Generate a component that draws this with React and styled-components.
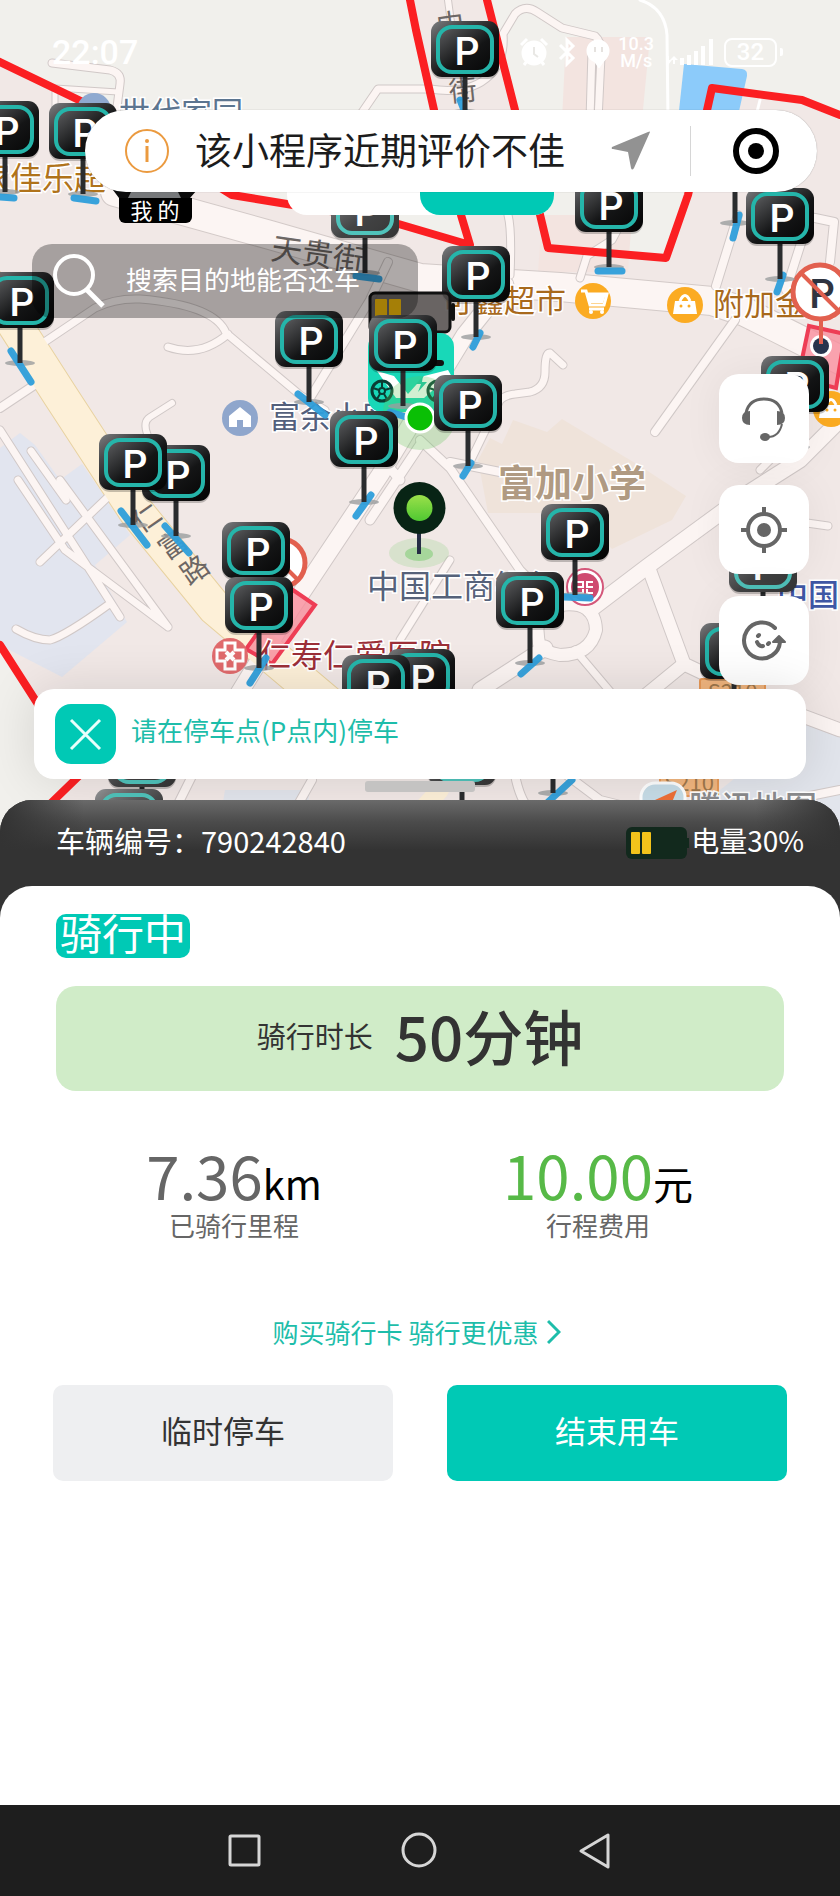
import React from "react";
import styled, { createGlobalStyle } from "styled-components";

const TEAL = "#00c9b5";
const FONT = '"Noto Sans CJK SC", sans-serif';

const GlobalStyle = createGlobalStyle`
  * { box-sizing: border-box; }
  body { margin: 0; background: #fff; font-family: ${FONT}; }
  button, input { font-family: inherit; }
  button { border: 0; padding: 0; background: none; cursor: pointer; }
`;

const Page = styled.div`
  min-height: 100vh;
  display: flex;
  flex-direction: column;
`;

/* ---------- map section ---------- */

const MapArea = styled.section`
  position: relative;
`;

const MapCanvas = styled.svg`
  position: absolute;
  top: 0;
  left: 0;
  width: 100%;
  height: calc(100% + 50px);
  font-family: ${FONT};
`;

const Overlay = styled.div`
  position: relative;
  display: flex;
  flex-direction: column;
`;

const StatusBar = styled.header`
  height: 110px;
  padding: 0 57px 6px 52px;
  display: flex;
  align-items: center;
  justify-content: space-between;
  color: #fff;
  font-family: Roboto, sans-serif;
`;

const Clock = styled.time`
  font-size: 34px;
  font-weight: 500;
`;

const StatusIcons = styled.div`
  display: flex;
  align-items: center;
`;

const NetSpeed = styled.span`
  margin: 0 12px 0 8px;
  font-size: 18px;
  line-height: 17px;
  font-weight: 500;
  text-align: center;
`;

const BatteryLevel = styled.span`
  width: 53px;
  height: 29px;
  margin-left: 8px;
  border: 2px solid #fff;
  border-radius: 8px;
  font-size: 24px;
  line-height: 25px;
  font-weight: 500;
  text-align: center;
`;

const BatteryNub = styled.span`
  width: 3px;
  height: 8px;
  margin: 0 0 0 3px;
  border-radius: 0 2px 2px 0;
  background: #fff;
`;

const Capsule = styled.div`
  position: relative;
  z-index: 1;
  height: 82px;
  margin: 0 23px 0 85px;
  padding: 0 37px 0 40px;
  display: flex;
  align-items: center;
  border-radius: 41px;
  background: #fff;
  box-shadow: 0 0 1px rgba(0, 0, 0, 0.4);
`;

const CapsuleText = styled.span`
  flex: 1;
  margin-left: 24px;
  padding-bottom: 4px;
  font-size: 37px;
  line-height: 48px;
  color: #1c1c1c;
  white-space: nowrap;
`;

const CapsuleDivider = styled.span`
  width: 1px;
  height: 50px;
  margin: 0 41px 0 39px;
  background: #d6d6d6;
`;

const UnderRow = styled.div`
  height: 71px;
  margin-top: -40px;
  padding-left: 113px;
  display: flex;
  align-items: flex-start;
`;

const MineButton = styled.button`
  width: 84px;
  align-self: flex-end;
  display: flex;
  flex-direction: column;
  align-items: center;
`;

const MineLabel = styled.span`
  width: 73px;
  height: 25px;
  border-radius: 0 0 6px 6px;
  background: #000;
  color: #fff;
  font-size: 22px;
  line-height: 22px;
  white-space: pre;
`;

const TabPill = styled.div`
  width: 267px;
  height: 63px;
  margin-left: 90px;
  display: flex;
  justify-content: flex-end;
  border-radius: 20px;
  background: #fff;
`;

const ActiveTab = styled.div`
  width: 134px;
  border-radius: 20px;
  background: ${TEAL};
`;

const SearchBox = styled.label`
  width: 46%;
  height: 74px;
  margin: 21px 0 0 32px;
  padding-left: 20px;
  display: flex;
  align-items: center;
  gap: 19px;
  border-radius: 20px;
  background: rgba(0, 0, 0, 0.31);
`;

const SearchInput = styled.input`
  flex: 1;
  min-width: 0;
  height: 46px;
  padding: 0 0 6px;
  border: 0;
  outline: 0;
  background: none;
  color: #fff;
  font-size: 26px;
  &::placeholder { color: #fff; opacity: 1; }
`;

const Tools = styled.nav`
  margin: 56px 31px 0 0;
  display: flex;
  flex-direction: column;
  align-items: flex-end;
  gap: 22px;
`;

const ToolButton = styled.button`
  width: 90px;
  height: 89px;
  display: flex;
  align-items: center;
  justify-content: center;
  border-radius: 20px;
  background: #fff;
  box-shadow: 0 0 40px rgba(0, 0, 0, 0.06);
`;

const Notice = styled.div`
  height: 90px;
  margin: 4px 34px 0;
  padding-left: 21px;
  display: flex;
  align-items: center;
  gap: 15px;
  border-radius: 20px;
  background: #fff;
  box-shadow: 0 0 50px rgba(0, 0, 0, 0.12);
  color: #1dbdaa;
  font-size: 26px;
  line-height: 36px;
`;

const NoticeText = styled.span`
  padding-bottom: 8px;
`;

const CloseButton = styled.button`
  width: 61px;
  height: 60px;
  display: flex;
  align-items: center;
  justify-content: center;
  border-radius: 16px;
  background: ${TEAL};
`;

const DragHandle = styled.div`
  width: 110px;
  height: 11px;
  margin: 2px auto 8px;
  border-radius: 3px;
  background: #c4c3c2;
`;

/* ---------- ride sheet ---------- */

const Sheet = styled.main`
  position: relative;
  flex: 1;
  display: flex;
  flex-direction: column;
  border-radius: 32px 32px 0 0;
  background: #333;
`;

const SheetHeader = styled.div`
  height: 86px;
  padding: 0 36px 0 56px;
  display: flex;
  align-items: center;
  justify-content: space-between;
  border-radius: 32px 32px 0 0;
  background: linear-gradient(90deg, #333 0, rgba(51, 51, 51, 0) 10%, rgba(51, 51, 51, 0) 90%, #333 100%),
    linear-gradient(#6a6a6a 0, #4b4b4b 22px, #333 50px);
  color: #fff;
  font-size: 28px;
  line-height: 40px;
`;

const HeaderText = styled.span`
  padding-bottom: 6px;
  font-size: ${(p) => (p.$large ? 29 : 28)}px;
`;

const Charge = styled.span`
  display: flex;
  align-items: center;
`;

const Panel = styled.div`
  flex: 1;
  padding: 28px 0 40px;
  border-radius: 32px 32px 0 0;
  background: #fff;
`;

const RideState = styled.span`
  display: block;
  width: max-content;
  height: 44px;
  margin-left: 56px;
  padding: 0 4px;
  border-radius: 10px;
  background: ${TEAL};
  color: #fff;
  font-size: 42px;
  line-height: 36px;
`;

const Duration = styled.div`
  height: 105px;
  margin: 28px 56px 0;
  padding-bottom: 7px;
  display: flex;
  align-items: center;
  justify-content: center;
  gap: 22px;
  border-radius: 20px;
  background: #d0ecc8;
  color: #333;
  font-size: 29px;
  line-height: 40px;
`;

const DurationValue = styled.strong`
  font-size: 60px;
  line-height: 80px;
  font-weight: 500;
`;

const Stats = styled.div`
  margin-top: 50px;
  padding: 0 60px 0 52px;
  display: grid;
  grid-template-columns: 1fr 1fr;
`;

const Stat = styled.div`
  display: flex;
  flex-direction: column;
  align-items: center;
  color: #666;
  font-size: 26px;
  line-height: 36px;
`;

const StatValue = styled.div`
  color: ${(p) => p.$color};
  font-size: 60px;
  line-height: 66px;
`;

const Unit = styled.span`
  color: #000;
  font-size: 40px;
  line-height: 40px;
`;

const CardLink = styled.a`
  width: max-content;
  margin: 71px auto 0;
  padding-right: 6px;
  display: flex;
  align-items: center;
  gap: 9px;
  color: #1dbdaa;
  font-size: 26px;
  line-height: 36px;
  text-decoration: none;
`;

const Actions = styled.div`
  margin-top: 35px;
  padding: 0 53px;
  display: grid;
  grid-template-columns: 1fr 1fr;
  gap: 54px;
`;

const ActionButton = styled.button`
  height: 96px;
  padding-bottom: 6px;
  border-radius: 10px;
  background: ${(p) => (p.$primary ? TEAL : "#eeeff1")};
  color: ${(p) => (p.$primary ? "#fff" : "#333")};
  font-size: 31px;
  line-height: 44px;
`;

const SystemNav = styled.footer`
  height: 91px;
  display: flex;
  align-items: center;
  justify-content: center;
  gap: 135px;
  background: #1e1e1e;
`;

const NavButton = styled.button`
  width: 40px;
  height: 40px;
`;

/* ---------- map data ---------- */

/* x, y is the foot of the sign; dash is the painted bay beside it */
const SIGNS = [
  { x: 5, y: 192, dash: [0, 197, 14, 198] },
  { x: 83, y: 194, dash: [74, 198, 96, 201] },
  { x: 465, y: 112, dash: [460, 100, 464, 110] },
  { x: 365, y: 273, dash: [356, 276, 379, 279], faded: true },
  { x: 609, y: 267, dash: [598, 271, 622, 271] },
  { x: 735, y: 223, dash: [739, 215, 733, 238] },
  { x: 780, y: 279, dash: [783, 275, 777, 292] },
  { x: 476, y: 337, dash: [480, 333, 473, 347] },
  { x: 20, y: 363, dash: [11, 351, 31, 382] },
  { x: 309, y: 402, dash: [298, 394, 325, 415] },
  { x: 403, y: 406, dash: [390, 412, 406, 417] },
  { x: 468, y: 466, dash: [471, 463, 463, 476] },
  { x: 364, y: 502, dash: [371, 495, 356, 516] },
  { x: 176, y: 536, dash: [165, 526, 189, 553] },
  { x: 133, y: 525, dash: [121, 511, 147, 545] },
  { x: 795, y: 447 },
  { x: 256, y: 613 },
  { x: 259, y: 668, dash: [266, 658, 250, 683] },
  { x: 575, y: 595, dash: [564, 597, 590, 598] },
  { x: 530, y: 663, dash: [539, 658, 521, 674] },
  { x: 421, y: 740 },
  { x: 376, y: 746 },
  { x: 763, y: 627, faded: true },
  { x: 734, y: 714 },
  { x: 142, y: 822, faded: true },
  { x: 129, y: 880, faded: true },
  { x: 462, y: 820, faded: true },
  { x: 553, y: 793, dash: [572, 780, 548, 802], faded: true },
];

const ROADS = [
  { d: "M52 63L110 70Q122 73 120 84L114 130", w: 7 },
  { d: "M55 130V88L118 92", w: 5 },
  { d: "M350 130L378 89H430Q470 95 490 75Q505 60 503 34L515 14Q525 4 537 12L562 28L595 36Q602 42 601 56L598 120M601 50H592L590 120", w: 7 },
  { d: "M448 0L452 30", w: 6 },
  { d: "M508 215Q512 230 510 275", w: 7 },
  { d: "M580 278L587 256L612 240L620 225", w: 7 },
  { d: "M738 215L716 286M810 215L786 290M815 218L834 222L830 262", w: 8 },
  { d: "M40 345L95 308Q115 298 140 299Q215 305 226 333L300 395L325 410M168 347Q200 358 228 334", w: 7 },
  { d: "M0 408L36 384", w: 8 },
  { d: "M310 398L370 300L388 262", w: 8 },
  { d: "M345 415L400 480M370 520L420 445", w: 9 },
  { d: "M235 700L290 610L380 475L465 335L505 285", w: 17 },
  { d: "M468 466L500 400Q505 395 515 394L530 392Q545 388 545 372Q545 352 550 353L563 365", w: 7 },
  { d: "M735 320L655 432", w: 8 },
  { d: "M420 440L450 468L520 570L560 610M450 462L500 472", w: 8 },
  { d: "M172 403L150 417Q142 422 148 436L158 455", w: 6 },
  { d: "M31 451L66 500M0 430L120 617M18 480L65 550L168 627M60 480L168 627M40 562L110 495M16 629Q35 640 50 640Q65 636 108 605", w: 7 },
  { d: "M410 700L400 640L450 560", w: 7 },
  { d: "M480 690L545 648M590 610L648 566L745 495L800 460L840 420", w: 15 },
  { d: "M648 566L684 664L640 700M684 664L760 700L840 730", w: 13 },
  { d: "M575 650L630 715M800 522L828 526M760 470L790 440L810 400", w: 7 },
  { d: "M540 648Q530 605 560 605Q595 600 596 630Q590 655 560 655Q545 652 540 648", w: 12 },
  { d: "M515 775Q520 800 530 810M560 770L600 800L660 815M790 800L840 790M175 810L195 770M295 810L312 780", w: 8 },
];

const RED_LINES = [
  "M0 62L85 103L232 195L385 220L470 245L461 215M434 110L416 30L410 0",
  "M487 0L515 110L548 248L666 258L688 195L712 88L802 100L840 115",
  "M0 645L82 773L48 806",
];

const LABELS = [
  { x: 119, y: 124, size: 31, color: "#5c7590", text: "世代家园" },
  { x: -22, y: 190, size: 32, color: "#b0731b", text: "家佳乐超" },
  { x: 442, y: 312, size: 31, color: "#a8691c", text: "可鑫超市" },
  { x: 713, y: 315, size: 31, color: "#a8691c", text: "附加金店" },
  { x: 269, y: 428, size: 31, color: "#53607c", text: "富余小区" },
  { x: 498, y: 497, size: 37, color: "#b09a82", text: "富加小学", weight: 700 },
  { x: 367, y: 598, size: 32, color: "#56627a", text: "中国工商银行" },
  { x: 259, y: 667, size: 32, color: "#9c2f38", text: "仁寿仁爱医院" },
  { x: 777, y: 606, size: 31, color: "#3f57a5", text: "中国", weight: 500 },
  { x: 689, y: 819, size: 32, color: "#8b8b8d", text: "腾讯地图", weight: 500 },
];

function Sign({ x, y, dash, faded }) {
  return (
    <g>
      <ellipse cx={x} cy={y} rx="15" ry="3" fill="#9b9d9f" opacity="0.8" />
      {dash && (
        <line x1={dash[0]} y1={dash[1]} x2={dash[2]} y2={dash[3]} stroke="#2f9fdb" strokeWidth="7" strokeLinecap="round" opacity="0.95" />
      )}
      <rect x={x - 2.5} y={y - 38} width="5" height="38" fill="#2a2c2e" />
      <rect x={x - 34} y={y - 89} width="68" height="56" rx="11" fill="#000" opacity="0.22" />
      <rect x={x - 34} y={y - 91} width="68" height="56" rx="11" fill="url(#sign)" />
      <rect x={x - 27} y={y - 85} width="54" height="45" rx="14" fill="none" stroke="#25b5aa" strokeWidth="4" />
      <text x={x + 2} y={y - 47} fontFamily="Roboto, sans-serif" fontSize="39" fontWeight="500" fill="#fff" textAnchor="middle">P</text>
      {faded && <rect x={x - 34} y={y - 91} width="68" height="56" rx="11" fill="#fff" opacity="0.2" />}
    </g>
  );
}

function Wheel({ x, y }) {
  return (
    <g stroke="#0a3d34" fill="none">
      <circle cx={x} cy={y} r="10" strokeWidth="3" />
      <circle cx={x} cy={y} r="3" strokeWidth="2" />
      <path strokeWidth="2" d={`M${x} ${y - 9}V${y - 3}M${x - 9} ${y - 3}L${x - 3} ${y - 1}M${x + 9} ${y - 3}L${x + 3} ${y - 1}M${x - 5} ${y + 8}L${x - 2} ${y + 3}M${x + 5} ${y + 8}L${x + 2} ${y + 3}`} />
    </g>
  );
}

function StreetMap() {
  return (
    <MapCanvas viewBox="0 0 840 850" preserveAspectRatio="xMidYMin slice" role="img" aria-label="地图">
      <defs>
        <linearGradient id="sign" x1="0" y1="0" x2="0.9" y2="1">
          <stop offset="0" stopColor="#7c7e80" />
          <stop offset="0.25" stopColor="#4a4b4d" />
          <stop offset="0.6" stopColor="#141516" />
          <stop offset="1" stopColor="#050505" />
        </linearGradient>
        <linearGradient id="pin" x1="0" y1="0" x2="0" y2="1">
          <stop offset="0" stopColor="#9be04a" />
          <stop offset="1" stopColor="#4fc832" />
        </linearGradient>
      </defs>

      <rect width="840" height="850" fill="#f1f0ec" />
      <path fill="#f1e8e6" d="M0 62L85 103L232 195L385 220L470 245L410 0H487L548 248L666 258L712 88L802 100L840 115V850H0L82 773L0 645Z" />
      <path fill="#f3e4e0" d="M566 37H650L642 120H562ZM540 245L545 215H632L628 272H538Z" />
      <path fill="#8ccbfa" d="M684 64L742 69Q748 70 747 76L737 120H678Z" />
      <path fill="#e2e5ef" d="M0 448L20 433L35 445L60 480L82 464L100 490L130 535L95 565L127 622L62 677L0 645Z" />
      <path fill="#e2e5ec" d="M806 722L840 736V850H700L720 790ZM225 790H310L300 850H215Z" />
      <path fill="#efe3da" d="M478 460L490 438L502 444L513 420L547 432L562 419L640 466L686 496L672 520L612 549L575 513H488Z" />

      <g fill="none" strokeLinecap="round" strokeLinejoin="round">
        <path d="M115 192L270 235L420 278L560 287L712 301L745 312L870 375" stroke="#d3cac8" strokeWidth="30" />
        <path d="M115 192L270 235L420 278L560 287L712 301L745 312L870 375" stroke="#fcf5f3" strokeWidth="28" />
        <path d="M-10 286L60 395L135 510L215 608L330 705" stroke="#e8d2a0" strokeWidth="36" />
        {ROADS.map((r) => (
          <path key={r.d} d={r.d} stroke="#d0c8c7" strokeWidth={r.w + 2} />
        ))}
        {ROADS.map((r) => (
          <path key={r.d} d={r.d} stroke="#fcf5f3" strokeWidth={r.w} />
        ))}
        <path d="M-10 286L60 395L135 510L215 608L330 705" stroke="#fdf0d8" strokeWidth="34" />
        <path d="M640 0Q665 8 667 35L668 120M760 100L755 120" stroke="#fff" strokeWidth="3" />
        <path d="M410 822L440 790" stroke="#fdf0d8" strokeWidth="18" />
        {RED_LINES.map((d) => (
          <path key={d} d={d} stroke="#fb1f22" strokeWidth="8" />
        ))}
      </g>

      <g fill="#f78d9c" fillOpacity="0.8" stroke="#ee3d55" strokeWidth="4">
        <path d="M290 588L315 605L272 664L246 649Z" />
        <path d="M809 326L845 334L836 388L798 378Z" />
      </g>

      <circle cx="94" cy="110" r="17" fill="#8fa9d0" />
      <circle cx="240" cy="418" r="18" fill="#8fa6cc" />
      <path d="M229 416L240 407L251 416V427H243V420H237V427H229Z" fill="#fff" />
      <circle cx="593" cy="301" r="18" fill="#fbab22" />
      <path d="M581 291H586L590 305H604L607 294H587M589 309H604" fill="none" stroke="#fff" strokeWidth="3" />
      <path d="M588 294H606L603 303H590Z" fill="#fff" />
      <circle cx="591" cy="312" r="2" fill="#fff" />
      <circle cx="602" cy="312" r="2" fill="#fff" />
      {[[685, 305], [831, 409]].map(([x, y]) => (
        <g key={x}>
          <circle cx={x} cy={y} r="18" fill="#fbab22" />
          <path d={`M${x - 10} ${y - 4}H${x + 10}L${x + 12} ${y + 9}H${x - 12}Z`} fill="#fff" />
          <path d={`M${x - 5} ${y - 4}Q${x} ${y - 15} ${x + 5} ${y - 4}`} fill="none" stroke="#fff" strokeWidth="3" />
          <circle cx={x - 4} cy={y + 1} r="1.5" fill="#fbab22" />
          <circle cx={x + 4} cy={y + 1} r="1.5" fill="#fbab22" />
        </g>
      ))}
      <circle cx="230" cy="656" r="18" fill="#e06a6c" />
      <path d="M225 643H235V650H243V661H235V669H225V661H217V650H225Z" fill="none" stroke="#fff" strokeWidth="3" />
      <path d="M226 652L234 660M234 652L226 660" stroke="#fff" strokeWidth="4" />
      <circle cx="585" cy="587" r="18" fill="#fff" stroke="#d4577a" strokeWidth="2" />
      <circle cx="585" cy="587" r="14" fill="#cf4a70" />
      <path d="M577 582H583V587H577M593 582H587V587H593M577 593H583V589M593 593H587V589" fill="none" stroke="#fff" strokeWidth="2" />

      {[[700, 679, 65], [660, 770, 58]].map(([x, y, w]) => (
        <g key={x}>
          <rect x={x} y={y} width={w} height="26" rx="2" fill="#f3b780" stroke="#e89a58" strokeWidth="2" />
          <text x={x + w / 2} y={y + 21} fontSize="22" fill="#a0784c" textAnchor="middle">S210</text>
        </g>
      ))}

      {LABELS.map((l) => (
        <text key={l.text} x={l.x} y={l.y} fontSize={l.size} fontWeight={l.weight || 400} fill={l.color} stroke="#fff" strokeWidth="3" paintOrder="stroke">
          {l.text}
        </text>
      ))}
      <g fill="#6d6765" fontSize="28">
        <text x="270" y="259" fontSize="31" transform="rotate(8 270 259)">天贵街</text>
        <text x="438" y="36" transform="rotate(-8 438 36)">中</text>
        <text x="450" y="102" transform="rotate(-6 450 102)">街</text>
        <text x="141" y="534" transform="rotate(-35 141 534)">仁</text>
        <text x="167" y="561" transform="rotate(-35 167 561)">富</text>
        <text x="189" y="586" transform="rotate(-35 189 586)">路</text>
      </g>

      <rect x="641" y="783" width="44" height="30" rx="14" fill="#c7dde8" stroke="#fff" strokeWidth="3" />
      <path d="M655 800L677 790L668 812Z" fill="#ee7038" />

      <g>
        <circle cx="281" cy="563" r="24" fill="#fff" stroke="#e2604f" strokeWidth="5" />
        <path d="M265 547L297 579" stroke="#e2604f" strokeWidth="4" />
      </g>
      <circle cx="821" cy="346" r="11" fill="#fff" />
      <circle cx="821" cy="346" r="8" fill="#28344d" />
      <rect x="819" y="318" width="4" height="26" fill="#e2604f" />
      <circle cx="820" cy="292" r="27" fill="#fff" stroke="#e2604f" strokeWidth="5" />
      <text x="822" y="308" fontSize="40" fontFamily="Roboto, sans-serif" fontWeight="500" fill="#2f3440" textAnchor="middle">P</text>
      <path d="M801 273L839 311" stroke="#e2604f" strokeWidth="4" />

      {SIGNS.slice(0, 10).map((s) => (
        <Sign key={`${s.x}-${s.y}`} {...s} />
      ))}

      <rect x="370" y="293" width="80" height="39" rx="5" fill="#514c4b" fillOpacity="0.85" stroke="#111" strokeWidth="3" />
      <rect x="451" y="303" width="4" height="18" rx="2" fill="#111" />
      <rect x="375" y="299" width="12" height="20" rx="1" fill="#f0b90b" />
      <rect x="389" y="299" width="12" height="20" rx="1" fill="#f0b90b" />
      <rect x="368" y="333" width="86" height="79" rx="14" fill="#18d8b8" />
      <path d="M377 371L394 376L408 394L424 376L448 370L456 384H440L424 398H396Z" fill="#fff" />
      <path d="M423 376L416 384H421L418 392L427 382H422Z" fill="#18c8a8" />
      <path d="M430 363H441" stroke="#111" strokeWidth="6" strokeLinecap="round" />
      <Wheel x={382} y={391} />
      <Wheel x={438} y={391} />
      <circle cx="420" cy="413" r="37" fill="#62c75a" opacity="0.28" />
      <Sign {...SIGNS[10]} />
      <circle cx="420" cy="418" r="14" fill="#0abf05" stroke="#fff" strokeWidth="3" />

      {SIGNS.slice(11).map((s) => (
        <Sign key={`${s.x}-${s.y}`} {...s} />
      ))}

      <ellipse cx="419" cy="553" rx="30" ry="15" fill="#8fcf83" opacity="0.25" />
      <ellipse cx="419" cy="554" rx="14" ry="7" fill="#73c96a" opacity="0.5" />
      <rect x="417" y="530" width="4" height="24" fill="#252e45" />
      <circle cx="419.5" cy="508" r="26" fill="#082415" />
      <circle cx="419.5" cy="508" r="13" fill="url(#pin)" />
    </MapCanvas>
  );
}

function StatusGlyphs() {
  return (
    <svg width="90" height="32" viewBox="0 0 90 32" fill="none" stroke="#fff" strokeWidth="3" aria-hidden="true">
      <circle cx="14" cy="17" r="11" fill="#fff" />
      <path d="M1 9L7 3M21 3L27 9M7 25L4 29M21 25L24 29" />
      <path d="M14 11V18L18 21" stroke="#e9e8e5" strokeWidth="2" />
      <path d="M40 9L53 22L47 28V4L53 10L40 23" />
      <circle cx="78" cy="15" r="10" fill="#fff" />
      <path d="M74 23L79 30L84 23Z" fill="#fff" />
      <path d="M75 11V16M82 11V16" stroke="#e5e2df" strokeWidth="2" />
    </svg>
  );
}

function App() {
  return (
    <Page>
      <GlobalStyle />
      <MapArea>
        <StreetMap />
        <Overlay>
          <StatusBar>
            <Clock>22:07</Clock>
            <StatusIcons>
              <StatusGlyphs />
              <NetSpeed>10.3<br />M/s</NetSpeed>
              <svg width="50" height="28" viewBox="0 0 50 28" fill="#fff" aria-hidden="true">
                <path d="M0 18h3v4h3l-4 5-4-5h2zM7 26v-4l-3 0 4-4 4 4h-3v4z" />
                <rect x="14" y="20" width="4" height="7" />
                <rect x="21" y="17" width="4" height="10" />
                <rect x="28" y="13" width="4" height="14" />
                <rect x="35" y="8" width="4" height="19" />
                <rect x="43" y="1" width="4" height="26" />
              </svg>
              <BatteryLevel>32</BatteryLevel>
              <BatteryNub />
            </StatusIcons>
          </StatusBar>

          <Capsule>
            <svg width="46" height="46" viewBox="0 0 46 46" fill="none" stroke="#eb9a3f" aria-hidden="true">
              <circle cx="22" cy="23" r="21" strokeWidth="2" />
              <path d="M22 18V34" strokeWidth="3" />
              <circle cx="22" cy="13" r="2" fill="#eb9a3f" stroke="none" />
            </svg>
            <CapsuleText>该小程序近期评价不佳</CapsuleText>
            <svg width="40" height="40" viewBox="0 0 40 40" fill="#929292" aria-hidden="true">
              <path d="M39 1Q39 0 37 1L1 16Q0 18 2 18L17 21L20 37Q21 40 23 37Z" />
            </svg>
            <CapsuleDivider />
            <svg width="48" height="48" viewBox="0 0 48 48" aria-hidden="true">
              <circle cx="24" cy="24" r="20" fill="none" stroke="#000" strokeWidth="6" />
              <circle cx="24" cy="24" r="8" />
            </svg>
          </Capsule>

          <UnderRow>
            <MineButton>
              <svg width="84" height="46" viewBox="0 0 84 46" aria-hidden="true">
                <path d="M0 0H84V38L77 46H6L0 38Z" fill="#0b0b0b" />
                <path d="M20 36H63L68 46H15Z" fill="#77797b" />
              </svg>
              <MineLabel>我 的</MineLabel>
            </MineButton>
            <TabPill>
              <ActiveTab />
            </TabPill>
          </UnderRow>

          <SearchBox>
            <svg width="55" height="55" viewBox="0 0 55 55" fill="none" stroke="#fff" strokeWidth="4" aria-hidden="true">
              <circle cx="22" cy="21" r="19" />
              <path d="M35 36L51 52" strokeWidth="5" />
            </svg>
            <SearchInput placeholder="搜索目的地能否还车" aria-label="搜索目的地能否还车" />
          </SearchBox>

          <Tools>
            <ToolButton aria-label="客服">
              <svg width="46" height="46" viewBox="0 0 46 46" fill="none" stroke="#666" aria-hidden="true">
                <path d="M5 17Q8 3 23 3Q38 3 41 17" strokeWidth="3" />
                <path d="M9 15Q1 15 1 22Q1 29 9 29ZM36 15Q44 15 44 22Q44 29 36 29Z" fill="#666" stroke="none" />
                <path d="M41 28Q38 41 27 41" strokeWidth="2" />
                <ellipse cx="24" cy="41" rx="5" ry="4" fill="#666" stroke="none" />
              </svg>
            </ToolButton>
            <ToolButton aria-label="定位">
              <svg width="46" height="46" viewBox="0 0 46 46" fill="none" stroke="#666" aria-hidden="true">
                <circle cx="23" cy="23" r="16" strokeWidth="4" />
                <circle cx="23" cy="23" r="7" fill="#666" stroke="none" />
                <path d="M23 0V8M23 38V46M0 23H8M38 23H46" strokeWidth="4" />
              </svg>
            </ToolButton>
            <ToolButton aria-label="刷新">
              <svg width="46" height="46" viewBox="0 0 46 46" fill="none" stroke="#666" strokeLinecap="round" aria-hidden="true">
                <path d="M34 10A18 18 0 1 0 39 24" strokeWidth="4" />
                <path d="M32 24L38 18L44 24Z" fill="#666" strokeWidth="2" strokeLinejoin="round" />
                <path d="M18 17L17 18M16 24Q18 29 22 28M27 26L28 25" strokeWidth="4" />
              </svg>
            </ToolButton>
          </Tools>

          <Notice>
            <CloseButton aria-label="关闭">
              <svg width="33" height="33" viewBox="0 0 33 33" stroke="#e8fffb" strokeWidth="3" aria-hidden="true">
                <path d="M2 2L31 31M31 2L2 31" />
              </svg>
            </CloseButton>
            <NoticeText>请在停车点(P点内)停车</NoticeText>
          </Notice>
          <DragHandle />
        </Overlay>
      </MapArea>

      <Sheet>
        <SheetHeader>
          <HeaderText $large>车辆编号：790242840</HeaderText>
          <Charge>
            <svg width="65" height="32" viewBox="0 0 65 32" aria-hidden="true">
              <rect width="61" height="32" rx="6" fill="#12291d" />
              <rect x="61" y="11" width="2" height="10" fill="#12291d" />
              <rect x="5" y="5" width="9" height="22" rx="1" fill="#f3c31b" />
              <rect x="16" y="5" width="9" height="22" rx="1" fill="#f3c31b" />
            </svg>
            <HeaderText>电量30%</HeaderText>
          </Charge>
        </SheetHeader>

        <Panel>
          <RideState>骑行中</RideState>
          <Duration>
            <span>骑行时长</span>
            <DurationValue>50分钟</DurationValue>
          </Duration>
          <Stats>
            <Stat>
              <StatValue $color="#666">7.36<Unit>km</Unit></StatValue>
              已骑行里程
            </Stat>
            <Stat>
              <StatValue $color="#57b947">10.00<Unit>元</Unit></StatValue>
              行程费用
            </Stat>
          </Stats>
          <CardLink href="#card">
            购买骑行卡 骑行更优惠
            <svg width="14" height="26" viewBox="0 0 14 26" fill="none" stroke="#1dbdaa" strokeWidth="3" aria-hidden="true">
              <path d="M1 2L12 13L1 24" />
            </svg>
          </CardLink>
          <Actions>
            <ActionButton>临时停车</ActionButton>
            <ActionButton $primary>结束用车</ActionButton>
          </Actions>
        </Panel>
      </Sheet>

      <SystemNav>
        <NavButton aria-label="最近任务">
          <svg width="40" height="40" viewBox="0 0 40 40" fill="none" stroke="#d6d6d6" strokeWidth="3">
            <rect x="5" y="5" width="29" height="29" rx="1" />
          </svg>
        </NavButton>
        <NavButton aria-label="主页">
          <svg width="40" height="40" viewBox="0 0 40 40" fill="none" stroke="#d6d6d6" strokeWidth="3">
            <circle cx="19" cy="19" r="16" />
          </svg>
        </NavButton>
        <NavButton aria-label="返回">
          <svg width="40" height="40" viewBox="0 0 40 40" fill="none" stroke="#d6d6d6" strokeWidth="3" strokeLinejoin="round">
            <path d="M6 20L33 4V36Z" />
          </svg>
        </NavButton>
      </SystemNav>
    </Page>
  );
}

export default App;
